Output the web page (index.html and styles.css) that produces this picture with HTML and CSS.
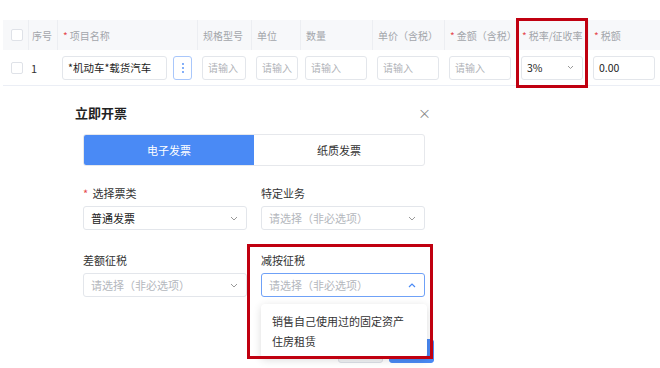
FILE: index.html
```html
<!DOCTYPE html>
<html lang="zh-CN">
<head>
  <meta charset="UTF-8" />
  <title>立即开票</title>
  <link rel="stylesheet" href="styles.css">
</head>
<body>
  <div class="page">
    <div class="goods-table">
      <div class="row head">
        <div class="cell"><span class="checkbox"></span></div>
        <div class="cell idx">序号</div>
        <div class="cell"><span class="req">*</span>项目名称</div>
        <div class="cell">规格型号</div>
        <div class="cell">单位</div>
        <div class="cell">数量</div>
        <div class="cell">单价（含税）</div>
        <div class="cell"><span class="req">*</span>金额（含税）</div>
        <div class="cell"><span class="req">*</span>税率/征收率</div>
        <div class="cell"><span class="req">*</span>税额</div>
      </div>
      <div class="row body">
        <div class="cell"><span class="checkbox"></span></div>
        <div class="cell idx num">1</div>
        <div class="cell name-cell">
          <div class="input filled">*机动车*载货汽车</div>
          <button class="more-btn" type="button">
            <svg width="4" height="12" viewBox="0 0 4 12"><circle cx="2" cy="2" r="0.9" fill="#4a8af5"/><circle cx="2" cy="6" r="0.9" fill="#4a8af5"/><circle cx="2" cy="10" r="0.9" fill="#4a8af5"/></svg>
          </button>
        </div>
        <div class="cell"><div class="input">请输入</div></div>
        <div class="cell"><div class="input">请输入</div></div>
        <div class="cell"><div class="input">请输入</div></div>
        <div class="cell"><div class="input">请输入</div></div>
        <div class="cell"><div class="input">请输入</div></div>
        <div class="cell">
          <div class="input filled select-sm">3%
            <svg width="7" height="5" viewBox="0 0 7 5"><path d="M1 1l2.5 2.5L6 1" fill="none" stroke="#999" stroke-width="1"/></svg>
          </div>
        </div>
        <div class="cell"><div class="input filled">0.00</div></div>
      </div>
      <div class="mark mark-rate"></div>
    </div>

    <div class="dialog">
      <div class="dialog-head">
        <h3>立即开票</h3>
        <span class="close">×</span>
      </div>

      <div class="dialog-body">
        <div class="tabs">
          <div class="tab active">电子发票</div>
          <div class="tab">纸质发票</div>
        </div>

        <div class="form-grid">
          <div class="field">
            <label><span class="req">*</span> 选择票类</label>
            <div class="select filled">普通发票
              <svg width="8" height="5" viewBox="0 0 8 5"><path d="M1 1l3 3 3-3" fill="none" stroke="#999" stroke-width="1"/></svg>
            </div>
          </div>
          <div class="field">
            <label>特定业务</label>
            <div class="select">请选择（非必选项）
              <svg width="8" height="5" viewBox="0 0 8 5"><path d="M1 1l3 3 3-3" fill="none" stroke="#999" stroke-width="1"/></svg>
            </div>
          </div>
          <div class="field">
            <label>差额征税</label>
            <div class="select">请选择（非必选项）
              <svg width="8" height="5" viewBox="0 0 8 5"><path d="M1 1l3 3 3-3" fill="none" stroke="#999" stroke-width="1"/></svg>
            </div>
          </div>
          <div class="field open">
            <label>减按征税</label>
            <div class="select focus">请选择（非必选项）
              <svg width="8" height="5" viewBox="0 0 8 5"><path d="M1 4l3-3 3 3" fill="none" stroke="#4a8af5" stroke-width="1.2"/></svg>
            </div>
            <ul class="dropdown">
              <li>销售自己使用过的固定资产</li>
              <li>住房租赁</li>
            </ul>
            <div class="mark mark-reduce"></div>
          </div>
        </div>

        <div class="dialog-foot">
          <button class="btn" type="button">取消</button>
          <button class="btn primary" type="button">开票</button>
        </div>
      </div>
    </div>
  </div>
</body>
</html>
```

FILE: styles.css
```css
body {
  margin: 0;
  padding: 0;
  background: #ffffff;
  font-family: "Noto Sans CJK SC", "Noto Sans", sans-serif;
  color: #333333;
}
.page {
  width: 660px;
  height: 368px;
  overflow: hidden;
}

/* goods table */
.goods-table {
  position: relative;
  margin: 20px 0 0 3px;
  width: 657px;
}
.row {
  display: grid;
  grid-template-columns: 25px 29px 140px 54px 49px 72px 72px 72px 72px 72px;
}
.row.head {
  height: 30px;
  background: #f7f8fa;
}
.row.body {
  height: 35px;
  border-bottom: 1px solid #ebeef5;
}
.cell {
  display: flex;
  align-items: center;
  padding-left: 5px;
  font-size: 10px;
  color: #a3a6ab;
  white-space: nowrap;
}
.cell.idx {
  padding-left: 3px;
}
.head .cell {
  border-left: 1px solid #eceef2;
}
.head .cell:first-child {
  border-left: none;
}
.body .cell {
  padding-right: 5px;
}
.cell.num {
  color: #333333;
  font-size: 11px;
}
.req {
  color: #e5484d;
  margin-right: 2px;
}
.checkbox {
  display: inline-block;
  width: 10px;
  height: 10px;
  border: 1px solid #dfe2e8;
  border-radius: 2px;
  background: #ffffff;
  margin-left: 3px;
}
.input {
  flex: 1;
  height: 24px;
  box-sizing: border-box;
  border: 1px solid #e3e6eb;
  border-radius: 3px;
  padding: 0 5px;
  display: flex;
  align-items: center;
  justify-content: space-between;
  font-size: 10px;
  color: #b0b3b8;
}
.input.filled {
  color: #222222;
  font-size: 10.5px;
}
.select-sm svg {
  margin-right: 3px;
}
.name-cell {
  gap: 6px;
}
.more-btn {
  width: 19px;
  height: 24px;
  border: 1px solid #a9c7fb;
  border-radius: 3px;
  background: #ffffff;
  padding: 0;
  display: flex;
  align-items: center;
  justify-content: center;
}

/* annotation frames */
.mark {
  position: absolute;
  border: 3px solid #c00010;
  box-sizing: border-box;
  pointer-events: none;
}
.mark-rate {
  left: 513px;
  top: -2px;
  width: 72px;
  height: 70px;
}

/* dialog */
.dialog {
  margin: 18px 0 0 75px;
  width: 357px;
}
.dialog-head {
  display: flex;
  justify-content: space-between;
  align-items: center;
  height: 16px;
}
.dialog-head h3 {
  margin: 0;
  font-size: 13px;
  font-weight: 700;
  color: #222222;
}
.close {
  font-size: 13px;
  color: #888888;
  margin-right: 1px;
}
.dialog-body {
  padding: 14px 7px 0 8px;
}
.tabs {
  display: grid;
  grid-template-columns: 1fr 1fr;
  height: 30px;
  border: 1px solid #e6e8ec;
  border-radius: 3px;
  overflow: hidden;
}
.tab {
  display: flex;
  align-items: center;
  justify-content: center;
  font-size: 11px;
  color: #333333;
}
.tab.active {
  background: #4a8af5;
  color: #ffffff;
}
.form-grid {
  display: grid;
  grid-template-columns: 164px 164px;
  column-gap: 14px;
  row-gap: 22px;
  margin-top: 19px;
}
.field {
  position: relative;
}
.field label {
  display: block;
  font-size: 11px;
  color: #333333;
  line-height: 16px;
  margin-bottom: 5px;
}
.select {
  height: 24px;
  box-sizing: border-box;
  border: 1px solid #e3e6eb;
  border-radius: 3px;
  padding: 0 8px 0 7px;
  display: flex;
  align-items: center;
  justify-content: space-between;
  font-size: 11px;
  color: #b4b7bd;
}
.select.filled {
  color: #222222;
}
.select.focus {
  border-color: #6fa1f7;
}
.dropdown {
  position: absolute;
  left: 0;
  top: 52px;
  width: 166px;
  margin: 0;
  padding: 7px 0 7px;
  list-style: none;
  background: #ffffff;
  border-radius: 4px;
  box-shadow: 0 2px 8px rgba(0, 0, 0, 0.14);
  z-index: 2;
}
.dropdown li {
  padding: 0 11px;
  line-height: 20px;
  font-size: 11px;
  color: #333333;
}
.mark-reduce {
  left: -14px;
  top: -8px;
  width: 186px;
  height: 115px;
  z-index: 3;
}
.dialog-foot {
  display: flex;
  justify-content: flex-end;
  gap: 6px;
  margin: 42px -9px 0 0;
}
.btn {
  height: 24px;
  width: 45px;
  border: 1px solid #dcdfe6;
  border-radius: 3px;
  background: #f2f3f5;
  font-family: inherit;
  font-size: 10px;
  color: #999999;
}
.btn.primary {
  background: #4a8af5;
  border-color: #4a8af5;
  color: #ffffff;
}
```
